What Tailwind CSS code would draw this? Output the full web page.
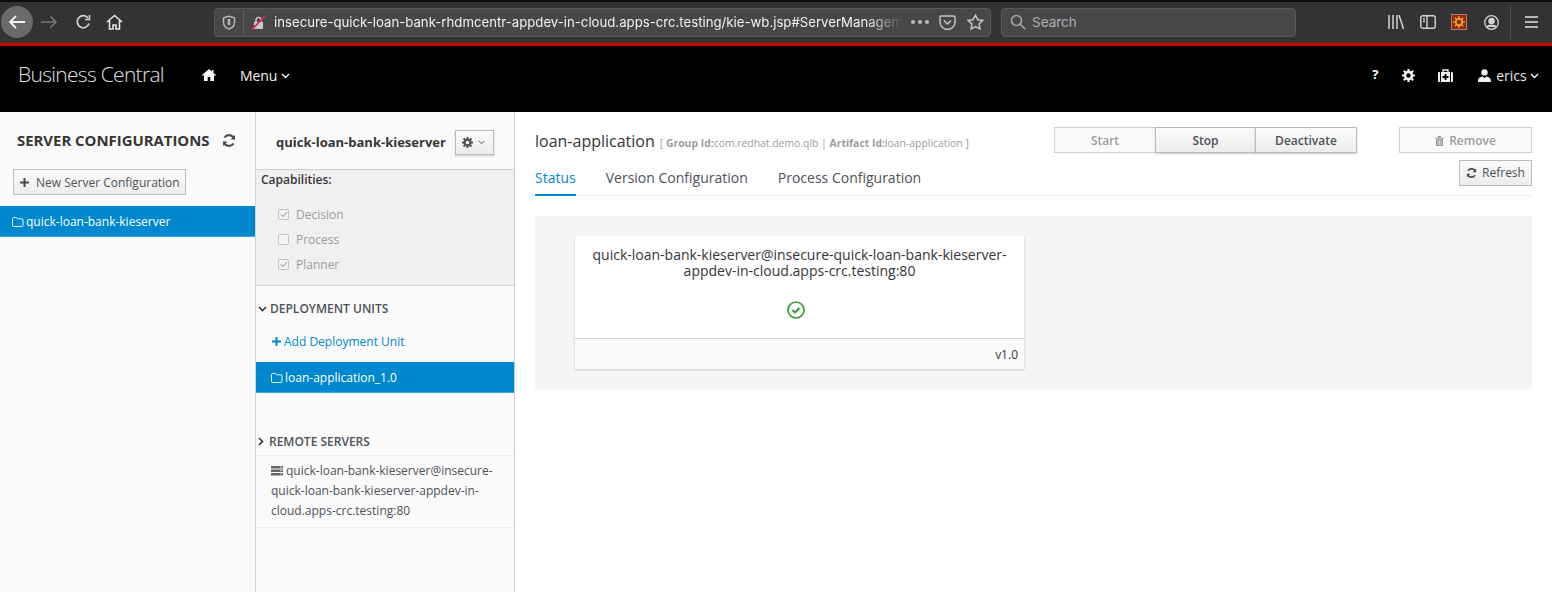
<!DOCTYPE html>
<html>
<head>
<meta charset="utf-8">
<script src="https://cdn.jsdelivr.net/npm/@tailwindcss/browser@4"></script>
</head>
<body class="w-[1552px] h-[592px] overflow-hidden bg-white font-['Open_Sans',sans-serif] text-[#363636]">
<!-- browser chrome -->
<div class="h-[43px] bg-[#333336] flex flex-col">
  <div class="h-[2px] flex bg-[#0c0c0d]"><div class="ml-[328px] w-[1224px]"></div></div>
  <div class="flex items-center flex-1 relative pb-[1px] font-['Inter',sans-serif]">
    <div class="ml-[1px] w-[32px] h-[32px] rounded-full bg-[#6a6a6c] flex items-center justify-center">
      <svg width="18" height="16" viewBox="0 0 18 16" fill="none" stroke="#f4f4f4" stroke-width="1.8"><path d="M17 8H2M8 2 2 8l6 6"/></svg>
    </div>
    <svg class="ml-[8px]" width="17" height="14" viewBox="0 0 17 14" fill="none" stroke="#77777a" stroke-width="1.6"><path d="M0 7h15M9.500 1.500 15 7l-5.500 5.500"/></svg>
    <svg class="ml-[17px]" width="17" height="16" viewBox="0 0 17 16" fill="none" stroke="#d2d2d4" stroke-width="1.700"><path d="M14 9.500A6 6 0 1 1 13 4"/><path d="M14.500 1v4.500H10" stroke-width="1.500"/></svg>
    <svg class="ml-[14px]" width="17" height="16" viewBox="0 0 17 16" fill="none" stroke="#e4e4e6" stroke-width="1.600"><path d="M1 8 8.500 1.500 16 8M3.500 6.500V15h3.500v-4h3v4h3.500V6.500"/></svg>
    <div class="ml-[91px] w-[777px] h-[29px] rounded-[4px] bg-[#474749] border border-[#58585a] flex items-center">
      <svg class="ml-[7px]" width="14" height="15" viewBox="0 0 14 15" fill="none" stroke="#b6b6b8" stroke-width="1.500"><path d="M7 1.200 1.500 2.800v4.500C1.500 10.500 4 13 7 14c3-1 5.500-3.500 5.500-6.700V2.800z"/><path d="M7 4v6" stroke-width="2.500"/></svg>
      <div class="ml-[7px] w-px h-[25px] bg-[#5d5d5f]"></div>
      <svg class="ml-[7px]" width="15" height="15" viewBox="0 0 15 15"><path d="M3 7h9v7H3z" fill="#c9c9cb"/><path d="M5 7V4.500a2.600 2.600 0 0 1 5 0V7" fill="none" stroke="#c9c9cb" stroke-width="1.500"/><path d="M1 14.500 14 1" stroke="#e22850" stroke-width="1.800"/></svg>
      <div class="ml-[8px] mt-[1px] w-[630px] whitespace-nowrap overflow-hidden text-[13.200px] text-[#f0f0f2] [mask-image:linear-gradient(to_right,black_94%,transparent)]">insecure-quick-loan-bank-rhdmcentr-appdev-in-cloud.apps-crc.testing/kie-wb.jsp#ServerManagement</div>
      <div class="ml-[7px] flex gap-[3px]"><i class="w-[4px] h-[4px] rounded-full bg-[#bdbdbf]"></i><i class="w-[4px] h-[4px] rounded-full bg-[#bdbdbf]"></i><i class="w-[4px] h-[4px] rounded-full bg-[#bdbdbf]"></i></div>
      <svg class="ml-[10px]" width="17" height="15" viewBox="0 0 17 15" fill="none" stroke="#c4c4c6" stroke-width="1.500"><path d="M2.500 1h12A1.500 1.500 0 0 1 16 2.500V7a7.500 7.500 0 0 1-15 0V2.500A1.500 1.500 0 0 1 2.500 1z"/><path d="m5 5.500 3.500 3.500L12 5.500"/></svg>
      <svg class="ml-[11px]" width="17" height="16" viewBox="0 0 17 16" fill="none" stroke="#c4c4c6" stroke-width="1.500"><path d="m8.500 1.200 2.200 4.500 5 .7-3.600 3.500.8 5-4.400-2.400-4.400 2.400.8-5L.9 6.400l5-.7z"/></svg>
    </div>
    <div class="ml-[10px] w-[295px] h-[29px] rounded-[4px] bg-[#474749] border border-[#58585a] flex items-center">
      <svg class="ml-[8px]" width="16" height="16" viewBox="0 0 16 16" fill="none" stroke="#a9a9ab" stroke-width="1.600"><circle cx="6.500" cy="6.500" r="5"/><path d="m10.300 10.300 5 5"/></svg>
      <span class="ml-[6px] mt-[1px] text-[13.500px] text-[#aeaeb0]">Search</span>
    </div>
    <svg class="ml-[92px]" width="16" height="14" viewBox="0 0 16 14" fill="none" stroke="#d4d4d6" stroke-width="1.500"><path d="M1 0v14M5 0v14M9 0v14M11 0l4.500 14"/></svg>
    <svg class="ml-[16px]" width="16" height="14" viewBox="0 0 16 14" fill="none" stroke="#d4d4d6" stroke-width="1.400"><rect x=".8" y=".8" width="14.400" height="12.400" rx="2"/><path d="M7 1v12M3 4h2M3 6.500h2" /></svg>
    <div class="ml-[15px] w-[16px] h-[16px] bg-[#8c2a12] border border-[#b8806a] flex items-center justify-center"><svg width="12" height="12" viewBox="0 0 12 12"><circle cx="6" cy="6" r="3.200" fill="none" stroke="#f0a020" stroke-width="1.800"/><path d="M6 0v2M6 10v2M0 6h2M10 6h2M1.800 1.800l1.400 1.400M8.800 8.800l1.400 1.400M1.800 10.200l1.400-1.400M8.800 3.200l1.400-1.400" stroke="#f0a020" stroke-width="1.500"/></svg></div>
    <svg class="ml-[17px]" width="15" height="15" viewBox="0 0 15 15" fill="none" stroke="#d4d4d6" stroke-width="1.300"><circle cx="7.500" cy="7.500" r="6.800"/><circle cx="7.500" cy="6" r="2.600" fill="#d4d4d6"/><path d="M3 12c1-2.500 8-2.500 9 0" fill="#d4d4d6"/></svg>
    <div class="ml-[11px] w-px h-[34px] bg-[#4c4c4e]"></div>
    <svg class="ml-[14px]" width="13" height="12" viewBox="0 0 13 12" stroke="#e4e4e6" stroke-width="1.700"><path d="M0 1h13M0 6h13M0 11h13"/></svg>
  </div>
</div>
<div class="h-[3px] bg-[#cc0000]"></div>
<!-- app header -->
<header class="h-[66px] pb-[8px] bg-black text-white flex items-center">
  <div class="ml-[18px] w-[147px] whitespace-nowrap text-[21px] font-light tracking-[-0.7px] text-[#e0e0e0]">Business Central</div>
  <svg class="ml-[37px]" width="14" height="12" viewBox="0 0 14 12" fill="#fff"><path d="M7 0 0 6l.8.900L2 6v6h3.700V8h2.600v4H12V6l1.200.900L14 6l-2.500-2.100V1H10v1.600z"/></svg>
  <span class="ml-[24px] text-[14px] font-medium tracking-[-0.1px] text-[#f0f0f0]">Menu</span>
  <svg class="ml-[4px] mt-[2px]" width="9" height="6" viewBox="0 0 9 6" fill="none" stroke="#fff" stroke-width="1.300"><path d="m1 1 3.500 3.500L8 1"/></svg>
  <span class="ml-[1082px] text-[13px] font-bold w-[10px]">?</span>
  <svg class="ml-[20px]" width="13" height="13" viewBox="0 0 13 13"><circle cx="6.500" cy="6.500" r="3.500" fill="none" stroke="#f2f2f2" stroke-width="2.600"/><path d="M6.500 0v3M6.500 10v3M0 6.500h3M10 6.500h3M1.800 1.800l2 2M9.200 9.200l2 2M1.800 11.200l2-2M9.200 3.800l2-2" stroke="#f2f2f2" stroke-width="2.200"/></svg>
  <svg class="ml-[23px]" width="15" height="13" viewBox="0 0 15 13"><path d="M5 3V1h5v2" fill="none" stroke="#eee" stroke-width="1.300"/><path d="M0 4a1 1 0 0 1 1-1h1v10H1a1 1 0 0 1-1-1zM3 3h9v10H3zM13 3h1a1 1 0 0 1 1 1v8a1 1 0 0 1-1 1h-1z" fill="#eee"/><path d="M7.500 5v6M4.500 8h6" stroke="#000" stroke-width="1.800"/></svg>
  <svg class="ml-[25px]" width="13" height="13" viewBox="0 0 13 13" fill="#f2f2f2"><circle cx="6.500" cy="3.400" r="3.200"/><path d="M0 13c0-3 1-5 4.500-5.500L6.500 9l2-1.500C12 8 13 10 13 13z"/></svg>
  <span class="ml-[5px] text-[14px] text-[#e8e8e8]">erics</span>
  <svg class="ml-[3px] mt-[2px]" width="9" height="6" viewBox="0 0 9 6" fill="none" stroke="#fff" stroke-width="1.300"><path d="m1 1 3.500 3.500L8 1"/></svg>
</header>
<div class="flex h-[480px]">
  <!-- servers column -->
  <aside class="w-[256px] shrink-0 bg-[#fafafa] border-r border-[#d1d1d1]">
    <div class="flex items-center pl-[17px] pt-[10px] h-[47px]">
      <h1 class="text-[14.900px] font-bold text-[#363636] w-[205px] whitespace-nowrap">SERVER CONFIGURATIONS</h1>
      <svg width="14" height="13" viewBox="0 0 14 13" fill="none" stroke="#4a4a4a" stroke-width="2.100"><path d="M12.300 5A5.500 5.500 0 0 0 2.500 3.500M1.700 8a5.500 5.500 0 0 0 9.800 1.500"/><path d="M13 1v4.500H8.500zM1 12V7.500h4.500z" fill="#4a4a4a" stroke="none"/></svg>
    </div>
    <button class="ml-[13px] mt-[10px] w-[173px] h-[26px] pt-[1px] border border-[#bbb] bg-gradient-to-b from-[#fafafa] to-[#ededed] flex items-center pl-[6px] text-[12px] text-[#4d5258]">
      <svg width="9" height="9" viewBox="0 0 9 9" stroke="#4a4a4a" stroke-width="2"><path d="M4.500 0v9M0 4.500h9"/></svg>
      <span class="ml-[7px]">New Server Configuration</span>
    </button>
    <div class="mt-[11px] h-[31px] pt-[2px] bg-[#0088ce] border-b border-[#39a5dc] flex items-center pl-[12px] text-white text-[12px]">
      <svg width="12" height="10" viewBox="0 0 12 10" fill="none" stroke="#fff" stroke-width=".9"><path d="M1.500.5h3l1 1.300h4.500a1 1 0 0 1 1 1v5.700a1 1 0 0 1-1 1H1.500a1 1 0 0 1-1-1v-7a1 1 0 0 1 1-1z"/></svg>
      <span class="ml-[2px]">quick-loan-bank-kieserver</span>
    </div>
  </aside>
  <!-- server detail column -->
  <section class="w-[259px] shrink-0 bg-[#fafafa] border-r border-[#d1d1d1]">
    <div class="h-[58px] pt-[4px] border-b border-[#d1d1d1] flex items-center pl-[20px]">
      <span class="text-[13px] font-bold text-[#363636] w-[179px] whitespace-nowrap">quick-loan-bank-kieserver</span>
      <button class="w-[39px] h-[25px] border border-[#bbb] shadow-[0_1px_2px_rgba(0,0,0,0.2)] bg-gradient-to-b from-[#fafafa] to-[#ededed] flex items-center pl-[6px] gap-[5px]">
        <svg width="11" height="11" viewBox="0 0 13 13"><circle cx="6.500" cy="6.500" r="3.500" fill="none" stroke="#4d5258" stroke-width="2.600"/><path d="M6.500 0v3M6.500 10v3M0 6.500h3M10 6.500h3M1.800 1.800l2 2M9.200 9.200l2 2M1.800 11.200l2-2M9.200 3.800l2-2" stroke="#4d5258" stroke-width="2.200"/></svg>
        <svg width="7" height="5" viewBox="0 0 9 6" fill="none" stroke="#4d5258" stroke-width="1.200"><path d="m1 1 3.500 3.500L8 1"/></svg>
      </button>
    </div>
    <div class="h-[116px] bg-[#f0f0f0] border-b border-[#d1d1d1] pl-[5px] pt-[1px]">
      <div class="text-[12px] font-semibold text-[#363636] leading-[17px]">Capabilities:</div>
      <div class="mt-[18px] flex flex-col gap-[8px] pl-[17px] text-[12px] text-[#9c9c9c] leading-[17px]">
        <label class="flex items-center h-[17px]"><span class="w-[11px] h-[11px] border border-[#c4c4c4] rounded-[2px] bg-[#f2f2f2] flex items-center justify-center"><svg width="8" height="7" viewBox="0 0 8 7" fill="none" stroke="#8a8a8a" stroke-width="1"><path d="m1 3.500 2 2L7 1"/></svg></span><span class="ml-[7px]">Decision</span></label>
        <label class="flex items-center h-[17px]"><span class="w-[11px] h-[11px] border border-[#c4c4c4] rounded-[2px] bg-[#f5f5f5]"></span><span class="ml-[7px]">Process</span></label>
        <label class="flex items-center h-[17px]"><span class="w-[11px] h-[11px] border border-[#c4c4c4] rounded-[2px] bg-[#f2f2f2] flex items-center justify-center"><svg width="8" height="7" viewBox="0 0 8 7" fill="none" stroke="#8a8a8a" stroke-width="1"><path d="m1 3.500 2 2L7 1"/></svg></span><span class="ml-[7px]">Planner</span></label>
      </div>
    </div>
    <div class="flex items-center h-[17px] mt-[14px] pl-[2px]">
      <svg width="9" height="6" viewBox="0 0 9 6" fill="none" stroke="#363636" stroke-width="1.600"><path d="m1 1 3.500 3.500L8 1"/></svg>
      <span class="ml-[3px] text-[12px] font-semibold text-[#4d5258]">DEPLOYMENT UNITS</span>
    </div>
    <div class="flex items-center h-[17px] mt-[16px] pl-[16px] text-[12px] text-[#0088ce]">
      <svg width="9" height="9" viewBox="0 0 9 9" stroke="#0088ce" stroke-width="2"><path d="M4.500 0v9M0 4.500h9"/></svg>
      <span class="ml-[3px]">Add Deployment Unit</span>
    </div>
    <div class="mt-[12px] h-[31px] pt-[2px] bg-[#0088ce] border-b border-[#39a5dc] flex items-center pl-[15px] text-white text-[12px]">
      <svg width="12" height="10" viewBox="0 0 12 10" fill="none" stroke="#fff" stroke-width=".9"><path d="M1.500.5h3l1 1.300h4.500a1 1 0 0 1 1 1v5.700a1 1 0 0 1-1 1H1.500a1 1 0 0 1-1-1v-7a1 1 0 0 1 1-1z"/></svg>
      <span class="ml-[2px]">loan-application_1.0</span>
    </div>
    <div class="mt-[40px] h-[23px] border-b border-[#ececec] flex items-start pl-[2px]">
      <div class="flex items-center h-[17px]">
        <svg width="6" height="9" viewBox="0 0 6 9" fill="none" stroke="#363636" stroke-width="1.600"><path d="m1 1 3.500 3.500L1 8"/></svg>
        <span class="ml-[5px] text-[12px] font-semibold text-[#4d5258]">REMOTE SERVERS</span>
      </div>
    </div>
    <div class="h-[72px] border-b border-[#ececec] pl-[15px] pr-[10px] pt-[5px] text-[12px] leading-[20px] text-[#4d5258]">
      <svg class="inline-block mr-[3px] align-[-1px]" width="12" height="10" viewBox="0 0 12 10" fill="#666"><path d="M0 0h12v2.500H0zM0 3.500h12V6H0zM0 7h12v2.500H0z"/><path d="M9 1.200h2M9 4.700h2M9 8.200h2" stroke="#ddd" stroke-width=".8"/></svg>quick-loan-bank-kieserver@insecure-<br>quick-loan-bank-kieserver-appdev-in-<br>cloud.apps-crc.testing:80
    </div>
  </section>
  <!-- main -->
  <main class="flex-1 pl-[20px] pr-[20px] pt-[15px]">
    <div class="flex items-start h-[26px]">
      <h2 class="text-[16px] leading-[26px] pt-[1px] text-[#363636] whitespace-nowrap">loan-application</h2>
      <span class="ml-[5px] mt-[4px] text-[10.400px] leading-[24px] whitespace-nowrap text-[#9c9c9c]">[ <b>Group Id:</b>com.redhat.demo.qlb | <b>Artifact Id:</b>loan-application ]</span>
      <div class="ml-auto mr-[42px] flex text-[12px] font-semibold h-[26px]">
        <button class="w-[102px] pt-[1px] border border-[#d1d1d1] bg-[#fafafa] text-[#9c9c9c]">Start</button>
        <button class="w-[101px] pt-[1px] -ml-px border border-[#bbb] bg-gradient-to-b from-[#fafafa] to-[#ededed] text-[#4d5258] shadow-[0_1px_2px_rgba(0,0,0,0.2)]">Stop</button>
        <button class="w-[102px] pt-[1px] -ml-px border border-[#bbb] bg-gradient-to-b from-[#fafafa] to-[#ededed] text-[#4d5258] shadow-[0_1px_2px_rgba(0,0,0,0.2)]">Deactivate</button>
      </div>
      <button class="w-[133px] h-[26px] pt-[1px] border border-[#d1d1d1] bg-[#fafafa] flex items-center justify-center gap-[5px] text-[12px] font-semibold text-[#9c9c9c]">
        <svg width="9" height="10" viewBox="0 0 9 10" fill="#9c9c9c"><path d="M0 1.500h9v1H0zM3 0h3v1.500H3zM1 3h7v7H1z"/><path d="M3 4v5M4.500 4v5M6 4v5" stroke="#fafafa" stroke-width=".6"/></svg>
        Remove
      </button>
    </div>
    <div class="flex justify-between h-[36px] mt-[7px] border-b border-[#ececec]">
      <nav class="flex gap-[30px] text-[14px] text-[#4d5258] pt-[8px] leading-[19px]">
        <span class="text-[#0088ce] border-b-2 border-[#0088ce] h-[28px]">Status</span>
        <span>Version Configuration</span>
        <span>Process Configuration</span>
      </nav>
      <button class="w-[73px] h-[26px] border border-[#bbb] bg-gradient-to-b from-[#fafafa] to-[#ededed] flex items-center justify-center gap-[5px] text-[12px] text-[#4d5258]">
        <svg width="11" height="10" viewBox="0 0 14 13" fill="none" stroke="#4a4a4a" stroke-width="2.100"><path d="M12.300 5A5.500 5.500 0 0 0 2.500 3.500M1.700 8a5.500 5.500 0 0 0 9.800 1.500"/><path d="M13 1v4.500H8.500zM1 12V7.500h4.500z" fill="#4a4a4a" stroke="none"/></svg>
        Refresh
      </button>
    </div>
    <div class="mt-[20px] h-[173px] bg-[#f5f5f5] pt-[20px] pl-[40px]">
      <div class="w-[449px] h-[133px] bg-white shadow-[0_1px_2px_rgba(0,0,0,0.2)] flex flex-col">
        <div class="flex-1 flex flex-col items-center pt-[11px]">
          <p class="text-center text-[14px] leading-[16px] text-[#363636] w-[430px]">quick-loan-bank-kieserver@insecure-quick-loan-bank-kieserver-appdev-in-cloud.apps-crc.testing:80</p>
          <svg class="mt-[22px] mr-[7px]" width="18" height="18" viewBox="0 0 18 18" fill="none" stroke="#3f9c35"><circle cx="9" cy="9" r="8" stroke-width="1.700"/><path d="m5.500 9 2.500 2.500 4.500-4.500" stroke-width="2"/></svg>
        </div>
        <div class="h-[31px] pt-[1px] bg-[#fafafa] border-t border-[#d1d1d1] flex items-center justify-end pr-[6px] text-[12px] text-[#363636]">v1.0</div>
      </div>
    </div>
  </main>
</div>
</body>
</html>
